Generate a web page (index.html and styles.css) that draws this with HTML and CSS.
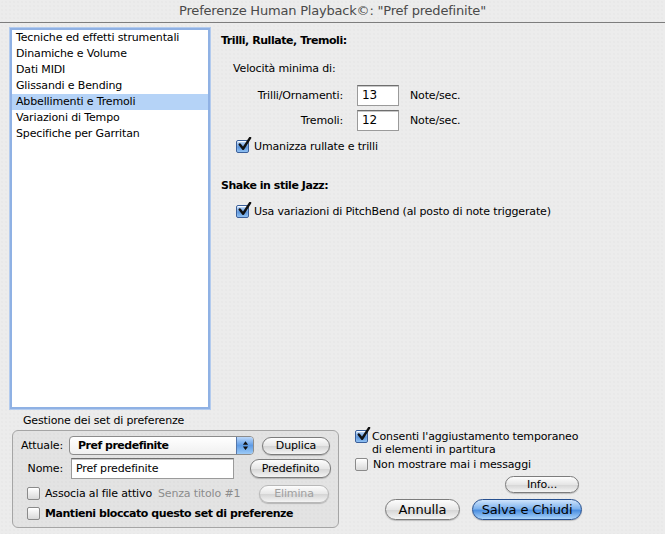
FILE: index.html
```html
<!DOCTYPE html>
<html lang="it">
<head>
  <meta charset="UTF-8" />
  <title>Preferenze Human Playback</title>
  <link rel="stylesheet" href="styles.css">
</head>
<body>
  <div class="window">
    <div class="titlebar">Preferenze Human Playback©: "Pref predefinite"</div>

    <div class="top">
      <!-- Category list -->
      <ul class="cat-list">
        <li>Tecniche ed effetti strumentali</li>
        <li>Dinamiche e Volume</li>
        <li>Dati MIDI</li>
        <li>Glissandi e Bending</li>
        <li class="selected">Abbellimenti e Tremoli</li>
        <li>Variazioni di Tempo</li>
        <li>Specifiche per Garritan</li>
      </ul>

      <!-- Settings pane -->
      <div class="pane">
        <h3 class="section-title">Trilli, Rullate, Tremoli:</h3>
        <p class="sub-label">Velocità minima di:</p>
        <div class="field-row">
          <span class="field-label">Trilli/Ornamenti:</span>
          <span class="text-field">13</span>
          <span class="unit">Note/sec.</span>
        </div>
        <div class="field-row">
          <span class="field-label">Tremoli:</span>
          <span class="text-field">12</span>
          <span class="unit">Note/sec.</span>
        </div>
        <label class="check-row indent">
          <span class="checkbox checked"><svg viewBox="0 0 16 16"><path d="M3 8 L6.5 12.5 L14 1" /></svg></span>
          Umanizza rullate e trilli
        </label>

        <h3 class="section-title jazz">Shake in stile Jazz:</h3>
        <label class="check-row indent">
          <span class="checkbox checked"><svg viewBox="0 0 16 16"><path d="M3 8 L6.5 12.5 L14 1" /></svg></span>
          Usa variazioni di PitchBend (al posto di note triggerate)
        </label>
      </div>
    </div>

    <div class="bottom">
      <!-- Preference sets -->
      <div class="sets">
        <div class="group-title">Gestione dei set di preferenze</div>
        <div class="group-box">
          <div class="group-row">
            <span class="row-label">Attuale:</span>
            <div class="popup">
              <span class="popup-text">Pref predefinite</span>
              <span class="popup-arrows">
                <svg viewBox="0 0 8 12"><path d="M1 5 L4 1 L7 5 Z M1 7 L4 11 L7 7 Z" /></svg>
              </span>
            </div>
            <button class="btn btn-dup">Duplica</button>
          </div>
          <div class="group-row row-name">
            <span class="row-label name-label">Nome:</span>
            <span class="text-field name-field">Pref predefinite</span>
            <button class="btn btn-def">Predefinito</button>
          </div>
          <div class="group-row row-assoc">
            <label class="check-row">
              <span class="checkbox"></span>
              Associa al file attivo
            </label>
            <span class="muted">Senza titolo #1</span>
            <button class="btn btn-del" disabled>Elimina</button>
          </div>
          <label class="check-row bold lock-row">
            <span class="checkbox"></span>
            Mantieni bloccato questo set di preferenze
          </label>
        </div>
      </div>

      <!-- Global options -->
      <div class="options">
        <label class="check-row top-align">
          <span class="checkbox checked"><svg viewBox="0 0 16 16"><path d="M3 8 L6.5 12.5 L14 1" /></svg></span>
          <span>Consenti l'aggiustamento temporaneo<br>di elementi in partitura</span>
        </label>
        <label class="check-row">
          <span class="checkbox"></span>
          Non mostrare mai i messaggi
        </label>
        <div class="info-row">
          <button class="btn btn-info">Info...</button>
        </div>
        <div class="action-row">
          <button class="btn btn-big">Annulla</button>
          <button class="btn btn-big btn-default">Salva e Chiudi</button>
        </div>
      </div>
    </div>
  </div>
</body>
</html>
```

FILE: styles.css
```css
* {
  box-sizing: border-box;
  margin: 0;
  padding: 0;
}

body {
  width: 665px;
  height: 534px;
  overflow: hidden;
  font-family: 'DejaVu Sans', 'Liberation Sans', sans-serif;
  font-size: 11px;
  letter-spacing: -0.15px;
  color: #000;
  background: #ececec;
}

.window {
  width: 665px;
  height: 534px;
  background-color: #ececec;
  background-image: radial-gradient(#e3e3e3 0.6px, transparent 0.8px);
  background-size: 4px 4px;
  border-radius: 6px 6px 0 0;
}

.titlebar {
  height: 23px;
  line-height: 22px;
  text-align: center;
  font-size: 13px;
  color: #4a4a4a;
  border-bottom: 1px solid #7d7d7d;
  letter-spacing: -0.2px;
}

/* ---------- top area ---------- */

.top {
  display: flex;
  padding: 5px 0 0 10px;
  height: 386px;
}

.cat-list {
  list-style: none;
  width: 200px;
  height: 381px;
  background: #fff;
  border: 2px solid #8fb1e4;
  box-shadow: 0 0 0 1px #b3cbee;
}

.cat-list li {
  height: 16px;
  line-height: 16px;
  padding-left: 4px;
  white-space: nowrap;
}

.cat-list li.selected {
  background: #b5d3f7;
}

.pane {
  padding-left: 11px;
  padding-top: 6px;
}

.section-title {
  font-size: 11px;
  font-weight: bold;
  line-height: 14px;
  letter-spacing: -0.45px;
}

.section-title.jazz {
  margin-top: 26px;
}

.sub-label {
  margin-top: 14px;
  margin-left: 12px;
  line-height: 14px;
}

.field-row {
  display: flex;
  align-items: center;
  margin-top: 4px;
}

.sub-label + .field-row {
  margin-top: 9px;
}

.field-label {
  width: 122px;
  text-align: right;
}

.text-field {
  display: inline-block;
  background: #fff;
  border: 1px solid #9a9a9a;
  border-top-color: #6e6e6e;
  box-shadow: inset 0 1px 0 #c8c8c8;
  height: 21px;
  line-height: 19px;
  padding-left: 4px;
}

.field-row .text-field {
  width: 42px;
  margin-left: 14px;
  font-size: 12px;
}

.unit {
  margin-left: 11px;
}

.check-row {
  display: flex;
  align-items: center;
  gap: 5px;
  white-space: nowrap;
}

.check-row.indent {
  margin-left: 15px;
}

.pane .check-row {
  margin-top: 9px;
}

.pane .jazz + .check-row {
  margin-top: 12px;
}

.checkbox {
  position: relative;
  flex: none;
  width: 13px;
  height: 13px;
  border: 1px solid #8a8a8a;
  border-radius: 2px;
  background: linear-gradient(#ffffff, #d9d9d9);
  box-shadow: inset 0 1px 1px #fff;
}

.checkbox.checked {
  border-color: #3a5f9a;
  background: linear-gradient(#c9e0fa, #5b95dd 55%, #8fc0f2);
}

.checkbox svg {
  position: absolute;
  left: 0;
  top: -4px;
  width: 15px;
  height: 15px;
  fill: none;
  stroke: #111;
  stroke-width: 2.6;
  stroke-linecap: round;
  stroke-linejoin: round;
}

/* ---------- bottom area ---------- */

.bottom {
  display: flex;
  padding-left: 12px;
}

.sets {
  width: 327px;
}

.group-title {
  padding-left: 11px;
  line-height: 14px;
  margin-top: 5px;
}

.group-box {
  margin-top: 2px;
  height: 98px;
  border: 1px solid #a5a5a5;
  border-radius: 6px;
  background: rgba(0, 0, 0, 0.035);
  padding: 4px 0 0 8px;
}

.group-row {
  display: flex;
  align-items: center;
  height: 21px;
}

.row-name {
  margin-top: 2px;
}

.row-assoc {
  margin-top: 4px;
}

.lock-row {
  height: 16px;
  margin-top: 1px;
}

.row-label {
  width: 48px;
}

.name-label {
  width: 50px;
  text-align: right;
  padding-right: 8px;
}

.popup {
  display: flex;
  width: 185px;
  height: 19px;
  border: 1px solid #8c8c8c;
  border-radius: 4px;
  background: linear-gradient(#ffffff, #f0f0f0);
  overflow: hidden;
}

.popup-text {
  flex: 1;
  font-weight: bold;
  line-height: 17px;
  padding-left: 8px;
  letter-spacing: -0.5px;
}

.popup-arrows {
  width: 17px;
  background: linear-gradient(#bcd8fa, #5f9ce6 50%, #9ccaf6);
  border-left: 1px solid #5577aa;
  display: flex;
  align-items: center;
  justify-content: center;
}

.popup-arrows svg {
  width: 7px;
  height: 11px;
  fill: #111;
}

.name-field {
  width: 163px;
  line-height: 19px;
}

.btn {
  font-family: inherit;
  font-size: 11px;
  letter-spacing: -0.15px;
  color: #000;
  height: 18px;
  border: 1px solid #7c7c7c;
  border-radius: 9px;
  background: linear-gradient(#fdfdfd, #e6e6e6 50%, #d4d4d4 51%, #f4f4f4);
  box-shadow: 0 1px 1px rgba(0, 0, 0, 0.2);
}

.btn-dup {
  width: 68px;
  margin-left: 8px;
}

.btn-def {
  width: 81px;
  margin-left: 16px;
  height: 19px;
}

.muted {
  color: #8c8c8c;
  margin-left: 6px;
}

.btn-del {
  width: 70px;
  margin-left: auto;
  margin-right: 9px;
  color: #a0a0a0;
  border-color: #b8b8b8;
}

.group-row .check-row {
  padding-left: 6px;
}

.group-box > .check-row {
  padding-left: 6px;
}

.bold {
  font-weight: bold;
  letter-spacing: -0.45px;
}

.options {
  padding-left: 16px;
  padding-top: 21px;
}

.check-row.top-align {
  align-items: flex-start;
  white-space: normal;
  line-height: 13px;
  gap: 4px;
}

.options .check-row + .check-row {
  margin-top: 2px;
}

.info-row {
  display: flex;
  justify-content: flex-end;
  width: 224px;
  margin-top: 5px;
}

.btn-info {
  width: 74px;
  height: 17px;
}

.action-row {
  display: flex;
  gap: 12px;
  margin-top: 6px;
  padding-left: 30px;
}

.btn-big {
  font-size: 13px;
  height: 21px;
  border-radius: 11px;
  width: 75px;
}

.btn-default {
  width: 110px;
  border-color: #27508f;
  background: linear-gradient(#cfe4fb, #7fb3ee 45%, #4c8fe0 55%, #a9d3fa);
}
```
